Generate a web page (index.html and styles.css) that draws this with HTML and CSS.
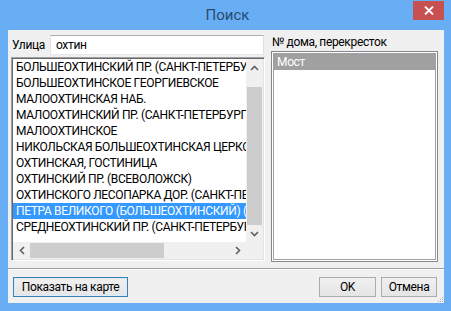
FILE: index.html
```html
<!DOCTYPE html>
<html lang="ru">
<head>
    <meta charset="UTF-8">
    <title>Поиск</title>
    <link rel="stylesheet" href="styles.css">
</head>
<body>
    <div class="window">
        <div class="titlebar">
            <span class="title">Поиск</span>
            <div class="close">
                <svg width="10" height="9" viewBox="0 0 10 9"><path d="M1 0.5 L9 8.5 M9 0.5 L1 8.5" stroke="#fff" stroke-width="1.8"/></svg>
            </div>
        </div>
        <div class="client">
            <div class="panes">
                <div class="street">
                    <div class="street-row">
                        <label for="street">Улица</label>
                        <input type="text" id="street" value="охтин">
                    </div>
                    <div class="listbox">
                        <div class="rows">
                            <div class="row">БОЛЬШЕОХТИНСКИЙ ПР. (САНКТ-ПЕТЕРБУРГ)</div>
                            <div class="row">БОЛЬШЕОХТИНСКОЕ ГЕОРГИЕВСКОЕ</div>
                            <div class="row">МАЛООХТИНСКАЯ НАБ.</div>
                            <div class="row">МАЛООХТИНСКИЙ ПР. (САНКТ-ПЕТЕРБУРГ)</div>
                            <div class="row">МАЛООХТИНСКОЕ</div>
                            <div class="row">НИКОЛЬСКАЯ БОЛЬШЕОХТИНСКАЯ ЦЕРКОВЬ</div>
                            <div class="row">ОХТИНСКАЯ, ГОСТИНИЦА</div>
                            <div class="row">ОХТИНСКИЙ ПР. (ВСЕВОЛОЖСК)</div>
                            <div class="row">ОХТИНСКОГО ЛЕСОПАРКА ДОР. (САНКТ-ПЕТЕРБУРГ)</div>
                            <div class="row selected">ПЕТРА ВЕЛИКОГО (БОЛЬШЕОХТИНСКИЙ) (РАЗВОДНОЙ) МОСТ</div>
                            <div class="row">СРЕДНЕОХТИНСКИЙ ПР. (САНКТ-ПЕТЕРБУРГ)</div>
                        </div>
                        <div class="vscroll">
                            <div class="arrow"><svg width="9" height="6" viewBox="0 0 9 6"><polyline points="1,5 4.5,1.5 8,5" fill="none" stroke="#606060" stroke-width="1.6"/></svg></div>
                            <div class="vgap"></div>
                            <div class="thumb"></div>
                            <div class="arrow"><svg width="9" height="6" viewBox="0 0 9 6"><polyline points="1,1 4.5,4.5 8,1" fill="none" stroke="#606060" stroke-width="1.6"/></svg></div>
                        </div>
                        <div class="hscroll">
                            <div class="arrow"><svg width="6" height="9" viewBox="0 0 6 9"><polyline points="5,1 1.5,4.5 5,8" fill="none" stroke="#606060" stroke-width="1.6"/></svg></div>
                            <div class="hthumb"></div>
                            <div class="htrack"></div>
                            <div class="arrow"><svg width="6" height="9" viewBox="0 0 6 9"><polyline points="1,1 4.5,4.5 1,8" fill="none" stroke="#606060" stroke-width="1.6"/></svg></div>
                        </div>
                        <div class="corner"></div>
                    </div>
                </div>
                <div class="house">
                    <div class="house-label">№ дома, перекресток</div>
                    <div class="listbox2">
                        <div class="item inactive">Мост</div>
                    </div>
                </div>
            </div>
            <div class="sep"></div>
            <div class="buttons">
                <button class="btn default">Показать на карте</button>
                <button class="btn ok">OK</button>
                <button class="btn cancel">Отмена</button>
            </div>
            <svg class="grip" width="7" height="7" viewBox="0 0 7 7">
                <rect x="5" y="1" width="1" height="1" fill="#b0b0b0"/>
                <rect x="3" y="3" width="1" height="1" fill="#b0b0b0"/>
                <rect x="5" y="3" width="1" height="1" fill="#b0b0b0"/>
                <rect x="1" y="5" width="1" height="1" fill="#b0b0b0"/>
                <rect x="3" y="5" width="1" height="1" fill="#b0b0b0"/>
                <rect x="5" y="5" width="1" height="1" fill="#b0b0b0"/>
            </svg>
        </div>
    </div>
</body>
</html>
```

FILE: styles.css
```css
* {
    box-sizing: border-box;
}
body {
    margin: 0;
    font-family: Roboto, "Liberation Sans", sans-serif;
    font-size: 12px;
    letter-spacing: -0.35px;
    color: #000;
}
.window {
    width: 451px;
    height: 311px;
    background-color: #68aef4;
    padding: 0 7px 8px 8px;
    display: flex;
    flex-direction: column;
}
.titlebar {
    height: 30px;
    position: relative;
    display: flex;
    align-items: center;
    justify-content: center;
}
.title {
    font-size: 15px;
    letter-spacing: 0;
    color: #2a4b6c;
    margin-left: 3px;
}
.close {
    position: absolute;
    right: 0;
    top: 1px;
    width: 31px;
    height: 19px;
    background-color: #c75050;
    display: flex;
    align-items: center;
    justify-content: center;
}
.client {
    flex: 1;
    background-color: #f0f0f0;
    display: flex;
    flex-direction: column;
    position: relative;
}
.panes {
    display: flex;
    gap: 6px;
    padding: 5px 6px 0 3px;
}
.street {
    width: 254px;
    display: flex;
    flex-direction: column;
    gap: 2px;
}
.street-row {
    display: flex;
    align-items: center;
    height: 20px;
}
.street-row label {
    width: 39px;
    padding-left: 1px;
}
.street-row input {
    flex: 1;
    height: 20px;
    margin-right: 1px;
    border: 1px solid #abadb3;
    border-color: #abadb3 #dbdfe6 #e3e9ef #e2e3ea;
    padding: 0 5px;
    font-family: inherit;
    font-size: 12px;
    letter-spacing: inherit;
    outline: none;
}
.listbox {
    height: 204px;
    border: 1px solid #a0a0a0;
    border-right-color: #fff;
    border-bottom-color: #fff;
    box-shadow: inset 1px 1px 0 #696969, inset -1px -1px 0 #e3e3e3;
    padding: 1px;
    background-color: #fff;
    display: grid;
    grid-template-columns: 1fr 17px;
    grid-template-rows: 1fr 17px;
}
.rows {
    overflow: hidden;
    min-width: 0;
}
.row {
    height: 16px;
    line-height: 16px;
    padding-left: 3px;
    white-space: nowrap;
    overflow: hidden;
}
.row.selected {
    background-color: #3399ff;
    color: #fff;
}
.vscroll {
    background-color: #f0f0f0;
    display: flex;
    flex-direction: column;
}
.arrow {
    width: 17px;
    height: 17px;
    display: flex;
    align-items: center;
    justify-content: center;
    flex: none;
}
.vgap {
    height: 11px;
}
.thumb {
    flex: 1;
    background-color: #cdcdcd;
    margin: 0 1px;
}
.hscroll {
    background-color: #f0f0f0;
    display: flex;
}
.hthumb {
    width: 134px;
    background-color: #cdcdcd;
    margin: 1px 0;
}
.htrack {
    flex: 1;
}
.corner {
    background-color: #f0f0f0;
}
.house {
    width: 167px;
    display: flex;
    flex-direction: column;
}
.house-label {
    height: 16px;
    line-height: 14px;
    padding-left: 1px;
}
.listbox2 {
    height: 211px;
    border: 1px solid #828790;
    box-shadow: inset 0 0 0 1px #fff, inset 0 0 0 2px #a0a0a0;
    padding: 2px;
    background-color: #fff;
}
.item {
    height: 16px;
    line-height: 16px;
    padding-left: 3px;
}
.item.inactive {
    background-color: #a0a0a0;
    color: #fff;
}
.sep {
    margin-top: 6px;
    height: 2px;
    border-top: 1px solid #a0a0a0;
    border-bottom: 1px solid #fff;
}
.buttons {
    display: flex;
    gap: 5px;
    padding: 7px 7px 0 5px;
}
.btn {
    height: 20px;
    font-family: inherit;
    font-size: 12px;
    letter-spacing: inherit;
    color: #000;
    border: 1px solid #acacac;
    background: linear-gradient(#f0f0f0, #e5e5e5);
    padding: 0;
}
.btn.default {
    width: 115px;
    border-color: #3c7fb1;
    box-shadow: inset 0 0 0 1px #dcecfc;
    margin-right: auto;
}
.btn.ok {
    width: 57px;
}
.btn.cancel {
    width: 56px;
}
.grip {
    position: absolute;
    right: 0;
    bottom: 0;
}
```
